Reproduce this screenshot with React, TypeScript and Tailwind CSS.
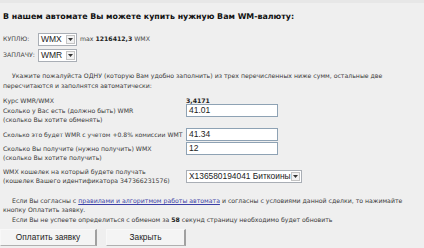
import React from "react";

const V = { fontFamily: '"DejaVu Sans", Verdana, sans-serif' };
const A = { fontFamily: '"Liberation Sans", Arial, sans-serif' };

function Sel({ value, w, fs }: { value: string; w: number; fs: string }) {
  return (
    <div
      className="flex items-center bg-white border border-[#a9aeb5] h-[13px] shrink-0"
      style={{ width: w }}
    >
      <span className={`flex-1 pl-[2px] ${fs} text-[#222] leading-none whitespace-nowrap overflow-hidden`} style={A}>
        {value}
      </span>
      <span className="w-[9px] h-[9px] mr-[1px] bg-[#f2f2f2] border border-[#c4c4c4] flex items-center justify-center shrink-0">
        <svg width="5" height="3" viewBox="0 0 5 3"><path d="M0 0h5L2.5 3z" fill="#333" /></svg>
      </span>
    </div>
  );
}

function Inp({ value }: { value: string }) {
  return (
    <div
      className="w-[92px] h-[13px] bg-white border border-[#8ea2b4] flex items-center pl-[2px] text-[8.5px] text-[#222] leading-none shrink-0"
      style={A}
    >
      {value}
    </div>
  );
}

export default function App() {
  return (
    <div className="w-[424px] h-[248px] bg-[#efefef] text-[#3a3a3a] overflow-hidden" style={V}>
      <div className="h-[3px] bg-[#e7e7e7]" />
      <div className="px-[3px]">
        <div className="mt-[9px] text-[7.9px] font-bold text-[#111] leading-[10px] whitespace-nowrap">
          В нашем автомате Вы можете купить нужную Вам WM-валюту:
        </div>
        <div className="mt-[11px] flex items-center h-[13px]">
          <span className="w-[35px] text-[6.2px] text-[#444] leading-none">КУПЛЮ:</span>
          <Sel value="WMX" w={39} fs="text-[8.5px]" />
          <span className="text-[6.2px] text-[#444] ml-[3px] leading-none whitespace-nowrap">
            max <b className="text-[#222]">1216412,3</b> WMX
          </span>
        </div>
        <div className="mt-[3px] flex items-center h-[13px]">
          <span className="w-[35px] text-[6.2px] text-[#444] leading-none whitespace-nowrap">ЗАПЛАЧУ:</span>
          <Sel value="WMR" w={39} fs="text-[8.5px]" />
        </div>
        <div className="mt-[9px] text-[6.2px] leading-[10px] whitespace-nowrap">
          <div className="pl-[9px]">
            Укажите пожалуйста ОДНУ (которую Вам удобно заполнить) из трех перечисленных ниже сумм, остальные две
          </div>
          <div>пересчитаются и заполнятся автоматически:</div>
        </div>
        <div className="mt-[5px] text-[6.2px] leading-[9px] whitespace-nowrap">
          <div className="flex items-center h-[9px]">
            <span className="w-[183px]">Курс WMR/WMX</span>
            <b className="text-[#222]">3,4171</b>
          </div>
          <div className="flex items-start mt-[1px]">
            <div className="w-[183px]">
              <div>Сколько у Вас есть (должно быть) WMR</div>
              <div>(сколько Вы хотите обменять)</div>
            </div>
            <div className="-mt-[2px]">
              <Inp value="41.01" />
            </div>
          </div>
          <div className="flex items-center mt-[6px] h-[9px]">
            <div className="w-[183px] text-[6.1px]">Сколько это будет WMR с учетом +0.8% комиссии WMT</div>
            <Inp value="41.34" />
          </div>
          <div className="flex items-start mt-[5px]">
            <div className="w-[183px]">
              <div>Сколько Вы получите (нужно получить) WMX</div>
              <div>(сколько Вы хотите получить)</div>
            </div>
            <div className="-mt-[2px]">
              <Inp value="12" />
            </div>
          </div>
          <div className="flex items-center mt-[5px]">
            <div className="w-[183px]">
              <div>WMX кошелек на который будете получать</div>
              <div>(кошелек Вашего идентификатора 347366231576)</div>
            </div>
            <Sel value="X136580194041 Биткоины" w={116} fs="text-[8.4px]" />
          </div>
        </div>
        <div className="mt-[11px] text-[6.2px] leading-[9px] whitespace-nowrap">
          <div className="pl-[9px]">
            Если Вы согласны с{" "}
            <span className="text-[#3b3fa6] underline">правилами и алгоритмом работы автомата</span> и согласны с
            условиями данной сделки, то нажимайте
          </div>
          <div>кнопку Оплатить заявку.</div>
          <div className="pl-[9px] mt-[1px]">
            Если Вы не успеете определиться с обменом за <b className="text-[#222]">58</b> секунд страницу необходимо
            будет обновить
          </div>
        </div>
      </div>
      <div className="mt-[5px] flex gap-[9px]">
        <button
          className="w-[97px] h-[17px] bg-[#f4f4f4] border-t border-l border-[#f8f8f8] border-r-2 border-r-[#a0a0a0] border-b border-b-[#b0b0b0] text-[8.3px] text-[#222] leading-none"
          style={A}
        >
          Оплатить заявку
        </button>
        <button
          className="w-[80px] h-[17px] bg-[#f4f4f4] border-t border-l border-[#f8f8f8] border-r-2 border-r-[#a0a0a0] border-b border-b-[#b0b0b0] text-[8.3px] text-[#222] leading-none"
          style={A}
        >
          Закрыть
        </button>
      </div>
    </div>
  );
}
